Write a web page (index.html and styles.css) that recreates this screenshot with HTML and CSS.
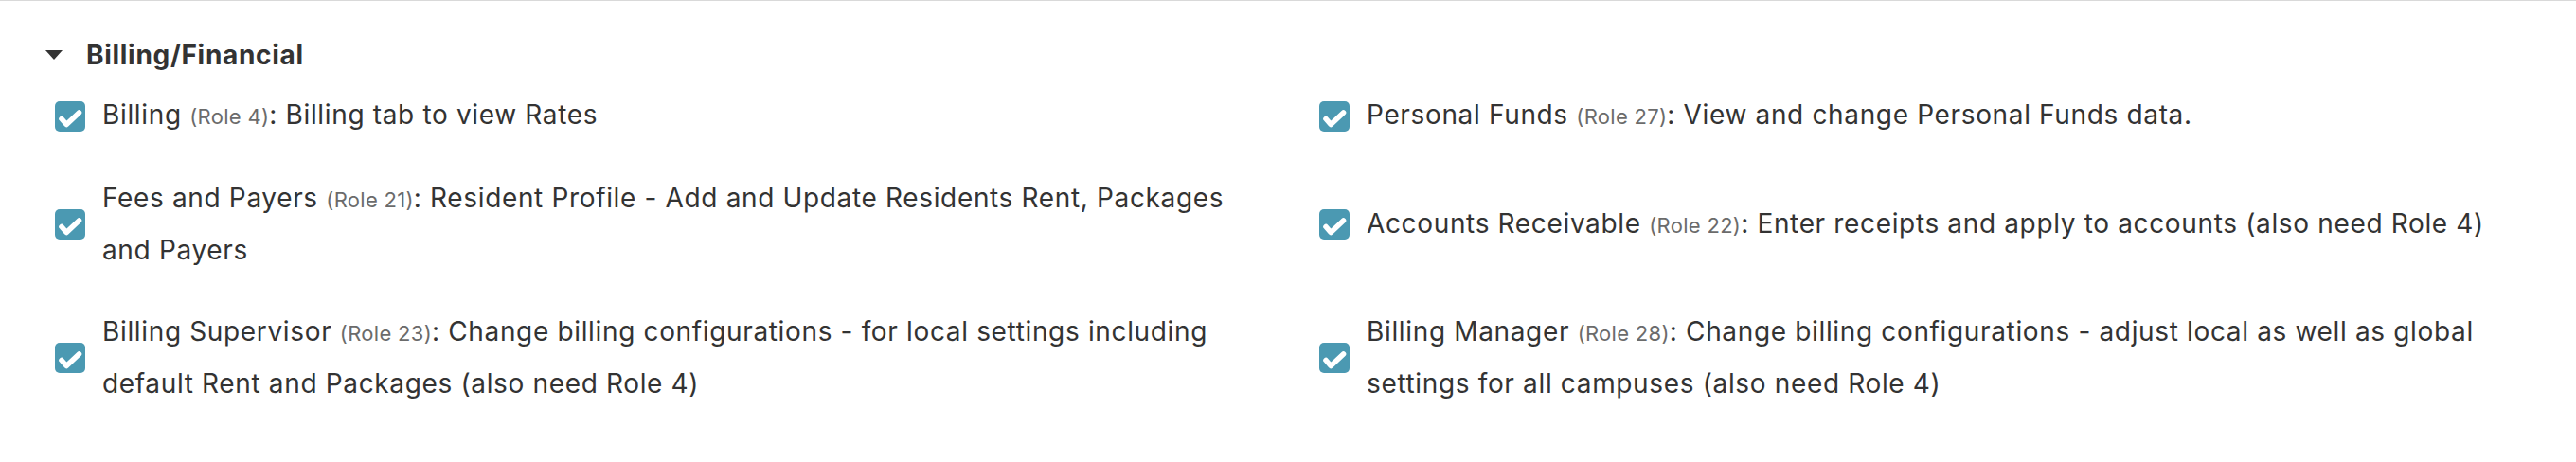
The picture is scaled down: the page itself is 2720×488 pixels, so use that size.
FILE: index.html
```html
<!DOCTYPE html>
<html lang="en">
<head>
<meta charset="utf-8">
<title>Billing/Financial</title>
<link rel="stylesheet" href="styles.css">
</head>
<body>
<section class="group">
  <h2 class="group-title">
    <svg class="caret" width="18" height="10" viewBox="0 0 18 10"><path d="M0 0H18L9 10Z" fill="#333"/></svg>
    <span>Billing/Financial</span>
  </h2>
  <div class="roles">
    <label class="role">
      <svg class="check" width="32" height="32" viewBox="0 0 32 32"><rect width="32" height="32" rx="5" fill="#4b99b2"/><path d="M7 18.5L12.2 24.5L25.5 12" fill="none" stroke="#fff" stroke-width="5.6" stroke-linecap="round" stroke-linejoin="round"/></svg>
      <span class="text">Billing <span class="num">(Role 4)</span>: Billing tab to view Rates</span>
    </label>
    <label class="role">
      <svg class="check" width="32" height="32" viewBox="0 0 32 32"><rect width="32" height="32" rx="5" fill="#4b99b2"/><path d="M7 18.5L12.2 24.5L25.5 12" fill="none" stroke="#fff" stroke-width="5.6" stroke-linecap="round" stroke-linejoin="round"/></svg>
      <span class="text">Personal Funds <span class="num">(Role 27)</span>: View and change Personal Funds data.</span>
    </label>
    <label class="role">
      <svg class="check" width="32" height="32" viewBox="0 0 32 32"><rect width="32" height="32" rx="5" fill="#4b99b2"/><path d="M7 18.5L12.2 24.5L25.5 12" fill="none" stroke="#fff" stroke-width="5.6" stroke-linecap="round" stroke-linejoin="round"/></svg>
      <span class="text">Fees and Payers <span class="num">(Role 21)</span>: Resident Profile - Add and Update Residents Rent, Packages and Payers</span>
    </label>
    <label class="role">
      <svg class="check" width="32" height="32" viewBox="0 0 32 32"><rect width="32" height="32" rx="5" fill="#4b99b2"/><path d="M7 18.5L12.2 24.5L25.5 12" fill="none" stroke="#fff" stroke-width="5.6" stroke-linecap="round" stroke-linejoin="round"/></svg>
      <span class="text">Accounts Receivable <span class="num">(Role 22)</span>: Enter receipts and apply to accounts (also need Role 4)</span>
    </label>
    <label class="role">
      <svg class="check" width="32" height="32" viewBox="0 0 32 32"><rect width="32" height="32" rx="5" fill="#4b99b2"/><path d="M7 18.5L12.2 24.5L25.5 12" fill="none" stroke="#fff" stroke-width="5.6" stroke-linecap="round" stroke-linejoin="round"/></svg>
      <span class="text">Billing Supervisor <span class="num">(Role 23)</span>: Change billing configurations - for local settings including default Rent and Packages (also need Role 4)</span>
    </label>
    <label class="role">
      <svg class="check" width="32" height="32" viewBox="0 0 32 32"><rect width="32" height="32" rx="5" fill="#4b99b2"/><path d="M7 18.5L12.2 24.5L25.5 12" fill="none" stroke="#fff" stroke-width="5.6" stroke-linecap="round" stroke-linejoin="round"/></svg>
      <span class="text">Billing Manager <span class="num">(Role 28)</span>: Change billing configurations - adjust local as well as global settings for all campuses (also need Role 4)</span>
    </label>
  </div>
</section>
</body>
</html>
```
FILE: styles.css
```css
html, body {
  margin: 0;
  padding: 0;
  background: #fff;
}
body {
  font-family: Inter, "Noto Sans", "Liberation Sans", sans-serif;
  color: #333;
  border-top: 1px solid #d9d9d9;
  height: 487px;
}
.group {
  padding: 40px 58px 0 48px;
}
.group-title {
  margin: 0;
  display: flex;
  align-items: center;
  font-size: 28px;
  line-height: 34px;
  font-weight: 700;
  letter-spacing: 0.7px;
  color: #333;
}
.caret {
  margin-right: 25px;
  flex: none;
}
.roles {
  margin-top: 20px;
  padding-left: 10px;
  display: grid;
  grid-template-columns: 1fr 1fr;
  column-gap: 66px;
  row-gap: 33px;
}
.role {
  display: flex;
  align-items: center;
  gap: 18px;
  font-size: 28px;
  line-height: 53px;
  letter-spacing: 0.65px;
  color: #333;
}
.check {
  flex: none;
  display: block;
}
.num {
  font-size: 22px;
  letter-spacing: 0.3px;
  color: #6b6b6b;
}
```
